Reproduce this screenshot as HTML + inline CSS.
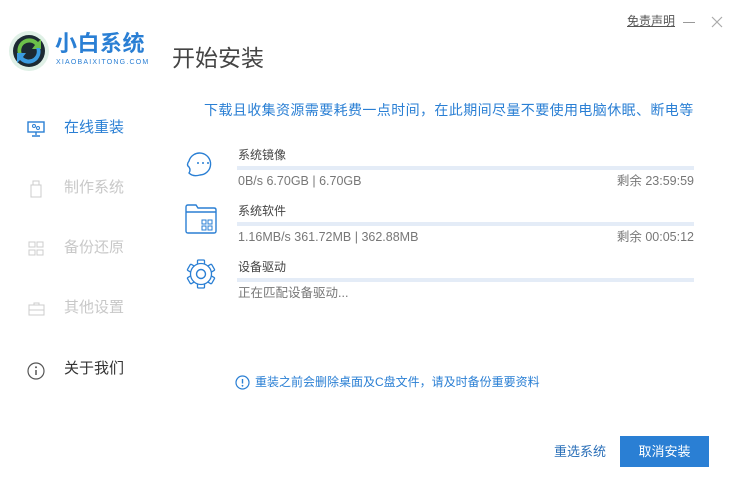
<!DOCTYPE html>
<html><head><meta charset="utf-8"><style>
*{margin:0;padding:0;box-sizing:border-box}
body{width:751px;height:487px;background:#fff;font-family:"Liberation Sans","Noto Sans CJK SC",sans-serif;position:relative;overflow:hidden;color:#333}
.a{position:absolute;white-space:nowrap;line-height:1.2}
.bar{position:absolute;left:237px;width:457px;height:4px;background:#e4ecf7}
.side{font-size:15px;color:#c8c8c8}
.g{font-size:12.5px;color:#777}
</style></head><body>
<svg class="a" style="left:8px;top:30px" width="42" height="42" viewBox="0 0 42 42">
<circle cx="21" cy="21" r="20" fill="#dff0e6"/>
<circle cx="21" cy="21" r="16" fill="#1c2a33"/>
<path d="M10 24 A12 12 0 0 1 30 12 L33 9 L33 19 L24 19 L27 15 A8 8 0 0 0 14 24Z" fill="#6cc04a"/>
<path d="M32 18 A12 12 0 0 1 12 30 L9 33 L9 23 L18 23 L15 27 A8 8 0 0 0 28 18Z" fill="#3a9be0"/>
</svg>
<div class="a" style="left:55px;top:31px;font-size:22px;font-weight:bold;color:#2a7fd4;letter-spacing:0.5px">小白系统</div>
<div class="a" style="left:56px;top:59px;font-size:7px;color:#2a7fd4;letter-spacing:1.2px">XIAOBAIXITONG.COM</div>
<div class="a" style="left:172px;top:45px;font-size:23px;color:#444">开始安装</div>
<div class="a" style="left:627px;top:14px;font-size:12px;color:#555;text-decoration:underline">免责声明</div>
<div class="a" style="left:683px;top:22px;width:12px;height:1px;background:#999"></div>
<svg class="a" style="left:711px;top:16px" width="12" height="12"><path d="M1 1L11 11M11 1L1 11" stroke="#aaa" stroke-width="1.2"/></svg>

<svg class="a" style="left:27px;top:121px" width="18" height="16" viewBox="0 0 18 16"><rect x="1" y="1" width="16" height="10" fill="none" stroke="#2a7fd4" stroke-width="1.4"/><path d="M9 11v3M5 15h8" stroke="#2a7fd4" stroke-width="1.4"/><circle cx="7" cy="5" r="1.5" fill="none" stroke="#2a7fd4"/><circle cx="11" cy="7" r="1.5" fill="none" stroke="#2a7fd4"/></svg>
<div class="a" style="left:64px;top:119px;font-size:15px;color:#2a7fd4">在线重装</div>
<svg class="a" style="left:30px;top:180px" width="12" height="18"><rect x="1" y="5" width="10" height="12" fill="none" stroke="#ccc"/><rect x="3" y="1" width="6" height="4" fill="none" stroke="#ccc"/></svg>
<div class="a side" style="left:64px;top:179px">制作系统</div>
<svg class="a" style="left:28px;top:241px" width="16" height="16"><rect x="1" y="1" width="6" height="5" fill="none" stroke="#ccc"/><rect x="1" y="9" width="6" height="5" fill="none" stroke="#ccc"/><rect x="9" y="1" width="6" height="5" fill="none" stroke="#ccc"/><rect x="9" y="9" width="6" height="5" fill="none" stroke="#ccc"/></svg>
<div class="a side" style="left:64px;top:239px">备份还原</div>
<svg class="a" style="left:28px;top:302px" width="17" height="14"><rect x="1" y="3" width="15" height="10" fill="none" stroke="#ccc"/><path d="M6 3V1h5v2M1 8h15" stroke="#ccc" fill="none"/></svg>
<div class="a side" style="left:64px;top:299px">其他设置</div>
<svg class="a" style="left:27px;top:362px" width="18" height="18"><circle cx="9" cy="9" r="8" fill="none" stroke="#555" stroke-width="1.2"/><path d="M9 8v5" stroke="#555" stroke-width="1.5"/><circle cx="9" cy="5.3" r="1" fill="#555"/></svg>
<div class="a" style="left:64px;top:360px;font-size:15px;color:#333">关于我们</div>

<div class="a" style="left:204px;top:102px;font-size:14px;letter-spacing:0.4px;color:#2a7fd4">下载且收集资源需要耗费一点时间，在此期间尽量不要使用电脑休眠、断电等</div>

<svg class="a" style="left:183px;top:147px" width="34" height="32" viewBox="0 0 34 32"><path d="M6 14 A11 11 0 1 1 17 28 Q10 30 6 26 Q8 23 6 20 Q3 18 6 14Z" fill="none" stroke="#2a7fd4" stroke-width="1.4"/><circle cx="15" cy="16" r="1" fill="#2a7fd4"/><circle cx="20" cy="16" r="1" fill="#2a7fd4"/><circle cx="25" cy="16" r="1" fill="#2a7fd4"/></svg>
<div class="a" style="left:238px;top:148px;font-size:12px;color:#444">系统镜像</div>
<div class="bar" style="top:166px"></div>
<div class="a g" style="left:238px;top:174px">0B/s 6.70GB | 6.70GB</div>
<div class="a g" style="right:57px;top:174px">剩余 23:59:59</div>

<svg class="a" style="left:185px;top:204px" width="32" height="30" viewBox="0 0 32 30"><path d="M1 3 Q1 1 3 1 H11 L13 4 H29 Q31 4 31 6 V27 Q31 29 29 29 H3 Q1 29 1 27Z M1 8 H31" fill="none" stroke="#2a7fd4" stroke-width="1.4"/><rect x="17" y="16" width="4" height="4" fill="none" stroke="#2a7fd4"/><rect x="23" y="16" width="4" height="4" fill="none" stroke="#2a7fd4"/><rect x="17" y="22" width="4" height="4" fill="none" stroke="#2a7fd4"/><rect x="23" y="22" width="4" height="4" fill="none" stroke="#2a7fd4"/></svg>
<div class="a" style="left:238px;top:204px;font-size:12px;color:#444">系统软件</div>
<div class="bar" style="top:222px"></div>
<div class="a g" style="left:238px;top:230px">1.16MB/s 361.72MB | 362.88MB</div>
<div class="a g" style="right:57px;top:230px">剩余 00:05:12</div>

<svg class="a" style="left:185px;top:258px" width="32" height="32" viewBox="0 0 32 32">
<g stroke="#2a7fd4" stroke-width="1.3" fill="none">
<rect x="12.5" y="2" width="7" height="6" rx="1"/>
<rect x="12.5" y="2" width="7" height="6" rx="1" transform="rotate(60 16 16)"/>
<rect x="12.5" y="2" width="7" height="6" rx="1" transform="rotate(120 16 16)"/>
<rect x="12.5" y="2" width="7" height="6" rx="1" transform="rotate(180 16 16)"/>
<rect x="12.5" y="2" width="7" height="6" rx="1" transform="rotate(240 16 16)"/>
<rect x="12.5" y="2" width="7" height="6" rx="1" transform="rotate(300 16 16)"/>
</g>
<circle cx="16" cy="16" r="10.5" fill="#fff" stroke="#2a7fd4" stroke-width="1.3"/>
<circle cx="16" cy="16" r="9.5" fill="#fff"/>
<circle cx="16" cy="16" r="4.5" fill="none" stroke="#2a7fd4" stroke-width="1.4"/>
</svg>
<div class="a" style="left:238px;top:260px;font-size:12px;color:#444">设备驱动</div>
<div class="bar" style="top:278px"></div>
<div class="a g" style="left:238px;top:286px">正在匹配设备驱动...</div>

<svg class="a" style="left:235px;top:375px" width="15" height="15"><circle cx="7.5" cy="7.5" r="6.5" fill="none" stroke="#2a7fd4" stroke-width="1.2"/><path d="M7.5 4v4.5" stroke="#2a7fd4" stroke-width="1.4"/><circle cx="7.5" cy="10.8" r=".9" fill="#2a7fd4"/></svg>
<div class="a" style="left:255px;top:375px;font-size:12px;color:#2a7fd4">重装之前会删除桌面及C盘文件，请及时备份重要资料</div>

<div class="a" style="left:554px;top:444px;font-size:13px;color:#2a6fb8">重选系统</div>
<div class="a" style="left:620px;top:436px;width:89px;height:31px;background:#2a7fd4;color:#fff;font-size:13px;text-align:center;line-height:31px">取消安装</div>
</body></html>
